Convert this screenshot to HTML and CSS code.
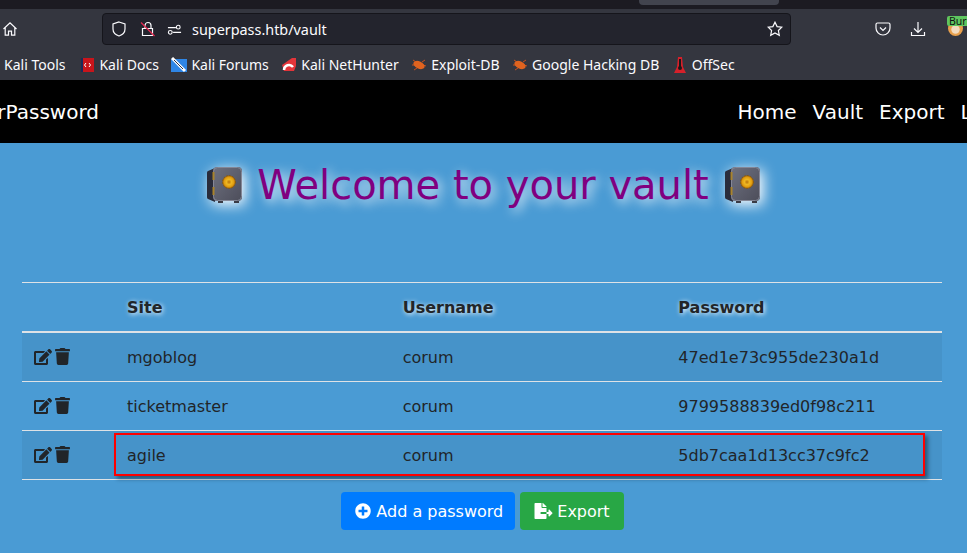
FILE: index.html
```html
<!DOCTYPE html>
<html lang="en">
<head>
    <meta charset="UTF-8">
    <meta name="viewport" content="width=device-width, initial-scale=1.0">
    <title>SuperPassword</title>
    <link rel="stylesheet" href="styles.css">
</head>
<body>
    <svg class="sprites" width="0" height="0" aria-hidden="true">
        <defs>
            <linearGradient id="safe-face" x1="0" y1="0" x2="1" y2="1">
                <stop offset="0" stop-color="#6f7180"/>
                <stop offset="1" stop-color="#4c4d5a"/>
            </linearGradient>
            <radialGradient id="safe-dial">
                <stop offset="0" stop-color="#b8730c"/>
                <stop offset="0.4" stop-color="#eeb722"/>
                <stop offset="0.75" stop-color="#e09c10"/>
                <stop offset="1" stop-color="#9c600a"/>
            </radialGradient>
        </defs>
        <symbol id="safe" viewBox="0 0 38 38">
            <path d="M3 5l7-3v34l-7-3a2 2 0 0 1-1-2V7a2 2 0 0 1 1-2z" fill="#2a2c3b"/>
            <rect x="8" y="1" width="29" height="34" rx="4" fill="url(#safe-face)"/>
            <rect x="8.500" y="1.500" width="28" height="33" rx="4" fill="none" stroke="#858796" stroke-width="1"/>
            <rect x="7.500" y="6" width="2" height="8" fill="#a9832c"/>
            <rect x="7.500" y="21" width="2" height="8" fill="#a9832c"/>
            <circle cx="24" cy="16" r="6.500" fill="url(#safe-dial)"/>
            <circle cx="24" cy="16" r="6.500" fill="none" stroke="#8a5a0c" stroke-width="1" stroke-dasharray="1.500 1.500"/>
            <rect x="13" y="35" width="5" height="2" fill="#3a3b45"/>
            <rect x="29" y="35" width="5" height="2" fill="#3a3b45"/>
        </symbol>
        <symbol id="edit" viewBox="0 0 576 512">
            <path fill="currentColor" d="M402.6 83.2l90.2 90.2c3.8 3.8 3.8 10 0 13.8L274.4 405.6l-92.8 10.3c-12.4 1.4-22.9-9.1-21.5-21.5l10.3-92.8L388.8 83.2c3.8-3.8 10-3.8 13.8 0zm162-22.9l-48.8-48.8c-15.2-15.2-39.9-15.2-55.2 0l-35.4 35.4c-3.8 3.8-3.8 10 0 13.8l90.2 90.2c3.8 3.8 10 3.8 13.8 0l35.4-35.4c15.2-15.3 15.2-40 0-55.2zM384 346.2V448H64V128h229.8c3.2 0 6.2-1.3 8.5-3.5l40-40c7.6-7.6 2.2-20.5-8.5-20.5H48C21.5 64 0 85.5 0 112v352c0 26.5 21.5 48 48 48h352c26.5 0 48-21.5 48-48V306.2c0-10.7-12.9-16-20.5-8.5l-40 40c-2.2 2.3-3.5 5.3-3.5 8.5z"/>
        </symbol>
        <symbol id="trash" viewBox="0 0 448 512">
            <path fill="currentColor" d="M432 32H312l-9.4-18.7A24 24 0 0 0 281.1 0H166.8a23.72 23.72 0 0 0-21.4 13.3L136 32H16A16 16 0 0 0 0 48v32a16 16 0 0 0 16 16h416a16 16 0 0 0 16-16V48a16 16 0 0 0-16-16zM53.2 467a48 48 0 0 0 47.9 45h245.8a48 48 0 0 0 47.9-45L416 128H32z"/>
        </symbol>
        <symbol id="bug" viewBox="0 0 16 16">
            <path d="M2 3l3 2M1 8l3 0M3 13l3-2M14 3l-3 2M15 9l-3-1" stroke="#c9501c" stroke-width="1" fill="none"/>
            <ellipse cx="8" cy="8" rx="6" ry="3.600" transform="rotate(25 8 8)" fill="#e0631f"/>
        </symbol>
    </svg>

    <div class="tab-strip"><div class="active-tab"></div></div>

    <div class="toolbar">
        <svg class="tool-icon home-icon" viewBox="0 0 16 16"><path d="M1.500 8L8 1.800 14.500 8M3.200 6.800v7.400h3.300v-4h3v4h3.300V6.800"/></svg>
        <div class="url-bar">
            <svg class="tool-icon" viewBox="0 0 16 16"><path d="M8 1l6 2v5c0 3.500-3 6-6 7-3-1-6-3.500-6-7V3z"/></svg>
            <svg class="tool-icon lock-icon" viewBox="0 0 16 16"><path d="M5 7V4.500a3 3 0 0 1 6 0V7M2.500 7.500h10v7h-10z"/><path class="lock-slash" d="M1 1.500l13.500 13.500"/></svg>
            <svg class="tool-icon sliders-icon" viewBox="0 0 16 16"><path d="M1 6h8.500M6.500 11H15"/><circle cx="12" cy="5.500" r="2"/><circle cx="3.500" cy="11" r="2"/></svg>
            <span class="url-text">superpass.htb/vault</span>
            <svg class="tool-icon star-icon" viewBox="0 0 16 16"><path d="M8 1.200l2.100 4.400 4.700.6-3.400 3.300.9 4.800L8 12l-4.300 2.300.9-4.800L1.200 6.200l4.700-.6z"/></svg>
        </div>
        <div class="toolbar-end">
            <svg class="tool-icon" viewBox="0 0 16 16"><path d="M2.500 2h11A1.500 1.500 0 0 1 15 3.500V7a7 7 0 0 1-14 0V3.500A1.500 1.500 0 0 1 2.500 2z"/><path d="M5 6.500l3 3 3-3"/></svg>
            <svg class="tool-icon" viewBox="0 0 16 16"><path d="M8 1v10M4 7.500l4 4 4-4M1.500 11v3.500h13V11"/></svg>
            <div class="burp-ext">
                <svg class="burp-face" viewBox="0 0 16 16"><circle cx="8" cy="8" r="8" fill="#e8a04c"/><circle cx="8" cy="9" r="4.500" fill="#f4dcc0"/></svg>
                <span class="burp-tag">Burp</span>
            </div>
        </div>
    </div>

    <div class="bookmarks">
        <span class="bookmark bookmark-first">Kali Tools</span>
        <span class="bookmark">
            <svg class="favicon" viewBox="0 0 16 16"><rect x="2" y="1" width="13" height="14" fill="#c8151b"/><rect x="2" y="1" width="2" height="14" fill="#1b2a5a"/><path d="M7 6L5.500 8 7 10M10 6l1.500 2L10 10" stroke="#fff" fill="none"/></svg>
            Kali Docs
        </span>
        <span class="bookmark">
            <svg class="favicon" viewBox="0 0 16 16"><rect y="2" width="16" height="13" fill="#2f86e6"/><path d="M1 1l13 13" stroke="#fff" stroke-width="3"/><path d="M3 3l9 9" stroke="#26324a" stroke-width="1"/></svg>
            Kali Forums
        </span>
        <span class="bookmark">
            <svg class="favicon" viewBox="0 0 16 16"><path d="M1 8L11 1h4v8l-2 5H3z" fill="#e3353a"/><path d="M3 13a5 5 0 0 1 9-3" stroke="#fff" stroke-width="2.500" fill="none"/></svg>
            Kali NetHunter
        </span>
        <span class="bookmark"><svg class="favicon"><use href="#bug"/></svg>Exploit-DB</span>
        <span class="bookmark"><svg class="favicon"><use href="#bug"/></svg>Google Hacking DB</span>
        <span class="bookmark">
            <svg class="favicon" viewBox="0 0 16 16"><path d="M6 0h4l1 10 3 6H2l3-6z" fill="#d5202a"/><path d="M8 2v8" stroke="#1a1a1a" stroke-width="2"/><circle cx="8" cy="11" r="2" fill="#1a1a1a"/></svg>
            OffSec
        </span>
    </div>

    <nav class="navbar">
        <a class="brand">SuperPassword</a>
        <div class="nav-links">
            <a>Home</a>
            <a>Vault</a>
            <a>Export</a>
            <a>Logout</a>
        </div>
    </nav>

    <main class="vault">
        <h1 class="vault-title">
            <svg class="safe-icon"><use href="#safe"/></svg>
            <span>Welcome to your vault</span>
            <svg class="safe-icon"><use href="#safe"/></svg>
        </h1>

        <table class="vault-table">
            <thead>
                <tr>
                    <th class="col-actions"></th>
                    <th>Site</th>
                    <th>Username</th>
                    <th>Password</th>
                </tr>
            </thead>
            <tbody>
                <tr>
                    <td><svg class="row-icon edit-icon"><use href="#edit"/></svg><svg class="row-icon trash-icon"><use href="#trash"/></svg></td>
                    <td>mgoblog</td>
                    <td>corum</td>
                    <td>47ed1e73c955de230a1d</td>
                </tr>
                <tr>
                    <td><svg class="row-icon edit-icon"><use href="#edit"/></svg><svg class="row-icon trash-icon"><use href="#trash"/></svg></td>
                    <td>ticketmaster</td>
                    <td>corum</td>
                    <td>9799588839ed0f98c211</td>
                </tr>
                <tr>
                    <td><svg class="row-icon edit-icon"><use href="#edit"/></svg><svg class="row-icon trash-icon"><use href="#trash"/></svg></td>
                    <td>agile</td>
                    <td>corum</td>
                    <td>5db7caa1d13cc37c9fc2</td>
                </tr>
            </tbody>
        </table>

        <div class="vault-actions">
            <a class="btn btn-add">
                <svg class="btn-icon" viewBox="0 0 512 512"><path fill="currentColor" d="M256 8C119 8 8 119 8 256s111 248 248 248 248-111 248-248S393 8 256 8zm144 276c0 6.600-5.400 12-12 12h-92v92c0 6.600-5.400 12-12 12h-56c-6.600 0-12-5.400-12-12v-92h-92c-6.600 0-12-5.400-12-12v-56c0-6.600 5.400-12 12-12h92v-92c0-6.600 5.400-12 12-12h56c6.600 0 12 5.400 12 12v92h92c6.600 0 12 5.400 12 12v56z"/></svg>
                Add a password
            </a>
            <a class="btn btn-export">
                <svg class="btn-icon btn-icon-wide" viewBox="0 0 576 512"><path fill="currentColor" d="M384 121.900c0-6.300-2.500-12.400-7-16.900L279.100 7c-4.500-4.500-10.600-7-17-7H256v128h128zM571 308l-95.700-96.400c-10.100-10.100-27.400-3-27.400 11.300V288h-64v64h64v65.200c0 14.300 17.300 21.400 27.400 11.300L571 332c6.600-6.600 6.600-17.400 0-24zm-379 28v-32c0-8.800 7.200-16 16-16h176V160H248c-13.200 0-24-10.800-24-24V0H24C10.700 0 0 10.700 0 24v464c0 13.300 10.700 24 24 24h336c13.300 0 24-10.700 24-24V352H208c-8.800 0-16-7.200-16-16z"/></svg>
                Export
            </a>
        </div>

        <div class="highlight-box"></div>
    </main>
</body>
</html>
```

FILE: styles.css
```css
html, body {
    height: 100%;
}
body {
    margin: 0;
    overflow: hidden;
    display: flex;
    flex-direction: column;
    background-color: #4a9bd4;
    font-family: "DejaVu Sans", sans-serif;
    color: #212529;
}
.sprites {
    position: absolute;
}

/* browser chrome */
.tab-strip {
    height: 9px;
    flex: none;
    background-color: #1c1b22;
    display: flex;
    justify-content: flex-end;
    padding-right: 188px;
}
.active-tab {
    width: 140px;
    height: 5px;
    background-color: #42444e;
    border-radius: 0 0 4px 4px;
}
.toolbar {
    height: 39px;
    flex: none;
    display: flex;
    align-items: center;
    background-color: #34363f;
    padding-top: 1px;
    box-sizing: border-box;
}
.tool-icon {
    width: 16px;
    height: 16px;
    flex: none;
    fill: none;
    stroke: #fbfbfe;
    stroke-width: 1.200;
}
.home-icon {
    margin-left: 2px;
}
.url-bar {
    margin-left: 84px;
    width: 689px;
    height: 32px;
    box-sizing: border-box;
    display: flex;
    align-items: center;
    gap: 13px;
    padding: 0 7px 0 8px;
    background-color: #23242d;
    border: 1px solid #15151b;
    border-radius: 4px;
}
.lock-slash {
    stroke: #e22850;
}
.sliders-icon {
    width: 15px;
    height: 15px;
    margin-left: -2px;
}
.url-text {
    flex: 1;
    margin-left: -3px;
    font-family: "Noto Sans", sans-serif;
    font-size: 14.400px;
    color: #fbfbfe;
}
.toolbar-end {
    margin-left: 84px;
    display: flex;
    align-items: center;
    gap: 19px;
}
.burp-ext {
    position: relative;
    width: 16px;
    height: 16px;
    margin-left: 3px;
}
.burp-face {
    width: 15px;
    height: 15px;
    display: block;
}
.burp-tag {
    position: absolute;
    top: -5px;
    left: -1px;
    padding: 0 2px;
    font-family: "Noto Sans", sans-serif;
    font-size: 10.500px;
    line-height: 10px;
    color: #111;
    background-color: #5fc65f;
    border-radius: 2px 0 0 2px;
}
.bookmarks {
    height: 32px;
    flex: none;
    box-sizing: border-box;
    padding-top: 1px;
    display: flex;
    align-items: center;
    gap: 12.500px;
    background-color: #34363f;
    font-family: "Noto Sans", sans-serif;
    font-size: 14px;
    color: #fbfbfe;
    white-space: nowrap;
}
.bookmark {
    display: flex;
    align-items: center;
    gap: 4px;
}
.bookmark-first {
    margin: 0 1.500px 0 4px;
}
.favicon {
    width: 16px;
    height: 16px;
    flex: none;
}

/* page nav */
.navbar {
    height: 63px;
    flex: none;
    display: flex;
    align-items: center;
    justify-content: space-between;
    background-color: #000;
    margin-left: -53px;
    margin-right: -62px;
    font-size: 20px;
    color: #fff;
    white-space: nowrap;
}
.nav-links {
    display: flex;
    gap: 16px;
}

/* vault */
.vault {
    position: relative;
    padding: 0 25px 0 22px;
}
.vault-title {
    margin: 16px 0 0;
    height: 123px;
    padding-left: 2px;
    display: flex;
    justify-content: center;
    align-items: flex-start;
    gap: 14px;
    font-size: 40px;
    font-weight: 400;
    line-height: 52px;
    color: #800080;
    text-shadow: 3px 3px 12px #fff;
}
.safe-icon {
    width: 38px;
    height: 38px;
    margin-top: 7px;
    filter: drop-shadow(3px 3px 7px #fff);
}
.vault-table {
    width: 920px;
    border-collapse: collapse;
    table-layout: fixed;
    font-size: 16px;
    line-height: 24px;
}
.vault-table th,
.vault-table td {
    padding: 13px 12px 11px;
    text-align: left;
    border-top: 1px solid #dee2e6;
}
.vault-table th {
    font-weight: 700;
    text-shadow: 1px 1px 5px #fff;
    border-bottom: 2px solid #dee2e6;
}
.col-actions {
    width: 69px;
}
.vault-table tbody tr:nth-child(odd) {
    background-color: rgba(0, 0, 0, 0.05);
}
.vault-table tbody tr:last-child td {
    border-bottom: 1px solid #dee2e6;
}
.row-icon {
    height: 16px;
    vertical-align: -2px;
}
.edit-icon {
    width: 18px;
}
.trash-icon {
    width: 15px;
    height: 17px;
    margin-left: 3px;
}
.vault-actions {
    display: flex;
    justify-content: center;
    gap: 5px;
    margin-top: 12px;
    padding-left: 1px;
}
.btn {
    display: inline-flex;
    align-items: center;
    gap: 5px;
    padding: 8px 13px 6px 14px;
    font-size: 16px;
    line-height: 24px;
    color: #fff;
    border-radius: 4px;
}
.btn-add {
    padding-right: 12px;
    background-color: #007bff;
}
.btn-export {
    gap: 4px;
    padding-right: 14px;
    background-color: #28a745;
}
.btn-icon {
    width: 16px;
    height: 16px;
    margin-top: -2px;
}
.btn-icon-wide {
    width: 19px;
}
.highlight-box {
    position: absolute;
    left: 114px;
    top: 290px;
    width: 807px;
    height: 39px;
    border: 2px solid #f00;
    box-shadow: 3px 3px 4px rgba(0, 0, 0, 0.4);
}
```
